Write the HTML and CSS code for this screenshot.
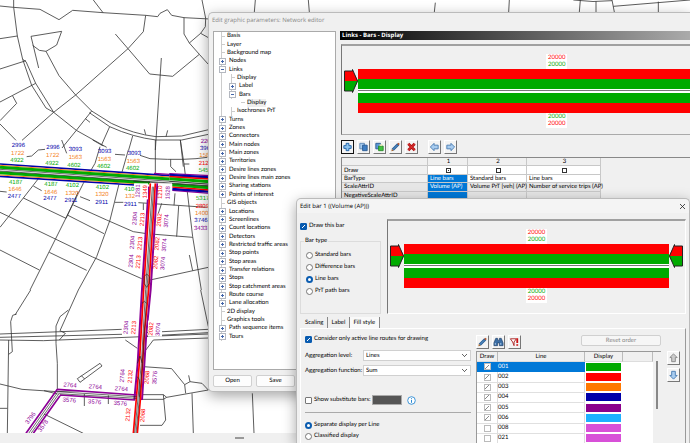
FILE: index.html
```html
<!DOCTYPE html>
<html lang="en">
<head>
    <meta charset="UTF-8">
    <meta name="viewport" content="width=device-width, initial-scale=1.0">
    <title>Network editor</title>
    <link rel="stylesheet" href="styles.css">
</head>
<body>
    <svg class="map" viewBox="0 0 2070 1329" preserveAspectRatio="xMinYMin slice">
        <!-- streets, north -->
        <g class="street">
            <path d="M0 18L40 22L120 28L177 59L218 31L309 38L437 46L473 50L480 40L502 29L515 46L552 53L630 57"/>
            <path d="M41 0V22L52 108L68 178L95 256L138 324L161 337M68 178L78 185L107 250L161 337M280 0L309 38"/>
            <path d="M0 116L52 108M0 207L78 182M0 306L107 250M38 288L50 310L0 362M0 372L48 421"/>
            <path d="M437 46L430 95L384 146L227 285L161 337L66 421"/>
            <path d="M346 102L384 146L449 222L518 229L598 163L568 129L552 102V53M598 163L625 193M606 0L617 55L616 80L602 100L568 129M602 100L625 113"/>
            <path d="M116 204L93 109L185 94L170 135L138 154L118 151L98 136M138 154L177 227L227 285L275 333"/>
            <path d="M275 333L334 370Q400 402 468 410L545 408L630 388M268 338L329 380Q400 412 468 420L545 420L630 402"/>
            <path d="M275 333L229 391L186 444M161 337L229 391L320 442M256 356L270 367M329 380L304 436M398 408L386 450M484 174L466 450M433 388L437 404M503 391L498 410M541 420L550 500"/>
            <path d="M766 0L763 36M925 0L928 36M1306 8L1303 36M1528 0L1526 36M1741 0L1738 36M1788 4V36M1836 0L1843 36M1840 19L2070 0M1975 5V36M1720 0Q1780 8 1836 2"/>
        </g>
        <!-- streets, centre -->
        <g class="street" transform="translate(0 420)">
            <path d="M80 50L95 48L115 30L135 28M185 0L200 40M278 0L310 18M345 43L375 45M466 0V110M541 0L552 72L578 290L604 450"/>
            <path d="M300 20L285 70L250 130L215 200L90 450M385 30L365 100L330 240L290 350L235 450M140 84L70 174L0 262M100 138L125 152"/>
            <path d="M70 174L198 235L235 155M0 217L166 297L278 351L425 416M0 330L118 390M202 225L312 281M148 337L260 391"/>
            <path d="M220 195L320 240L400 275L440 281L578 292M240 170L270 182M345 187L370 187M415 188L620 202M536 198L530 290M450 420L625 382M568 345L578 392"/>
            <path d="M0 154L20 156M420 46L450 56Q560 62 622 52M512 58V80L528 95M552 72H568M525 160L522 196M485 190L475 220M430 190V210"/>
        </g>
        <!-- streets, south -->
        <g class="street" transform="translate(0 870)">
            <path d="M92 0L45 75M235 0L180 122M0 132L365 118M0 142L400 132M0 150L130 152L625 132M430 128L625 118M440 138L625 128M460 150L625 144"/>
            <path d="M50 72L38 76L32 95L37 185L26 193M26 150L22 430M205 60L180 80L168 108V160L172 220V300M180 122L196 130L178 150"/>
            <path d="M0 282L66 298L172 305L238 302M132 302L172 312M0 355H22M376 150L412 175M460 150L430 190M132 372L250 430"/>
            <path d="M430 230L515 236L554 284L557 310M554 284L570 275L566 256M570 275L606 280L625 300L500 322L490 314H425M425 328L490 328L500 322M490 314L497 390L486 406H415M602 0L625 110M576 310L580 430M757 310L762 430"/>
            <path d="M232 266L300 220L306 228L240 277ZM244 257L254 267M253 312V348M325 316V342"/>
        </g>

        <!-- main road volumes -->
        <g class="bars" transform="translate(0 420)">
            <path class="white" stroke-width="38" d="M0 91L508 124L630 132"/>
            <path class="c4" stroke-width="5" d="M0 72L508 107M0 109L405 135"/>
            <path class="c3" stroke-width="3" d="M0 76L508 111M0 105L405 131"/>
            <path class="c1" stroke-width="9" d="M0 82L508 117M0 98L450 129"/>
            <path class="thin" d="M0 88L625 132M0 93L625 137"/>
            <path class="c5" stroke-width="4" d="M462 100L508 103M508 101L630 107M517 151L630 160"/>
            <path class="c4" stroke-width="7" d="M508 105L630 112M517 147L630 155"/>
            <path class="c2" stroke-width="5" d="M508 110L630 117M517 141L630 150"/>
            <path class="c1" stroke-width="9" d="M508 116L630 125M517 134L630 143"/>
            <path class="thin" d="M508 124L630 133M400 124L630 138"/>
        </g>
        <!-- north-south road volumes -->
        <g class="bars">
            <path class="white" stroke-width="22" d="M459 550L437 868L424 1090L407 1300"/>
            <path class="c5" stroke-width="6" d="M446 560L426 868L413 1090L403 1200M472 550L452 868L439 1000L426 1200"/>
            <path class="c2" stroke-width="5" d="M451 550L431 868L418 1090L400 1300M466 550L446 868L433 1000L421 1200L412 1300"/>
            <path class="thin" d="M457 560L437 868L424 1090L404 1300M461 560L441 868L428 1090L408 1300"/>
            <path class="thin" d="M432 830L440 822L448 830V850L440 862L432 850ZM426 910L433 904L440 910M412 1090L420 1068L427 1090M412 1130L418 1140V1190"/>
            <path class="c5" stroke-width="5" d="M172 1168L410 1185M180 1185L405 1200M172 1168L78 1300M180 1187L100 1300"/>
            <path class="thin" d="M170 1175L410 1190M175 1181L410 1195M172 1178L86 1300M176 1182L93 1300"/>
        </g>

        <!-- volume labels -->
        <g class="halo">
            <rect x="402" y="550" width="42" height="48"/><rect x="474" y="550" width="42" height="48"/>
            <rect x="366" y="958" width="44" height="48"/><rect x="444" y="962" width="42" height="48"/>
        </g>
        <g class="volume c4">
            <text x="55" y="435">2996</text><text x="159" y="440">2996</text><text x="226" y="447">3093</text><text x="314" y="453">3093</text><text x="403" y="460">3093</text>
            <text x="43" y="587">2477</text><text x="150" y="595">2477</text><text x="213" y="600">2911</text><text x="305" y="606">2911</text><text x="391" y="611">2911</text>
            <text x="620" y="443">3965</text><text x="603" y="661">3746</text>
        </g>
        <g class="volume c3">
            <text x="53" y="458">1722</text><text x="158" y="466">1722</text><text x="226" y="471">1563</text><text x="313" y="476">1563</text><text x="400" y="482">1563</text>
            <text x="45" y="566">1646</text><text x="152" y="575">1646</text><text x="216" y="579">1320</text><text x="306" y="583">1320</text><text x="390" y="589">132</text>
            <text x="618" y="466">1582</text><text x="605" y="639">1400</text>
        </g>
        <g class="volume c1">
            <text x="51" y="480">4922</text><text x="156" y="488">4922</text><text x="222" y="494">4602</text><text x="311" y="499">4602</text><text x="398" y="505">4602</text>
            <text x="47" y="545">4187</text><text x="153" y="551">4187</text><text x="217" y="554">4102</text><text x="307" y="562">4102</text><text x="388" y="567">410</text>
            <text x="616" y="511">5451</text><text x="608" y="594">5317</text>
        </g>
        <g class="volume c2">
            <text x="616" y="488">2123</text><text x="607" y="617">2809</text>
            <text transform="translate(435 575) rotate(-88)">1349</text><text transform="translate(480 577) rotate(-88)">1210</text>
            <text transform="translate(427 658) rotate(-86)">2213</text><text transform="translate(478 660) rotate(-86)">2082</text>
            <text transform="translate(420 730) rotate(-86)">2213</text><text transform="translate(471 731) rotate(-86)">2082</text>
            <text transform="translate(415 786) rotate(-86)">2213</text><text transform="translate(467 787) rotate(-86)">2082</text>
            <text transform="translate(401 983) rotate(-86)">2213</text><text transform="translate(453 987) rotate(-86)">2082</text>
            <text transform="translate(391 1129) rotate(-86)">2132</text><text transform="translate(441 1132) rotate(-86)">2068</text>
            <text transform="translate(384 1244) rotate(-86)">2132</text><text transform="translate(428 1246) rotate(-86)">2068</text>
        </g>
        <g class="volume c5">
            <text x="622" y="422">2205</text><text x="602" y="685">3433</text>
            <text transform="translate(413 573) rotate(-88)">1281</text><text transform="translate(503 578) rotate(-88)">1528</text>
            <text transform="translate(404 655) rotate(-86)">2304</text><text transform="translate(499 663) rotate(-86)">3074</text>
            <text transform="translate(397 727) rotate(-86)">2304</text><text transform="translate(493 735) rotate(-86)">3074</text>
            <text transform="translate(393 783) rotate(-86)">2304</text><text transform="translate(488 790) rotate(-86)">3074</text>
            <text transform="translate(378 982) rotate(-86)">2304</text><text transform="translate(474 988) rotate(-86)">3074</text>
            <text transform="translate(367 1127) rotate(-86)">2764</text><text transform="translate(464 1133) rotate(-86)">3576</text>
            <text transform="translate(210 1155) rotate(4)">2764</text><text transform="translate(286 1160) rotate(4)">2764</text><text transform="translate(364 1166) rotate(4)">2764</text>
            <text transform="translate(208 1200) rotate(4)">3576</text><text transform="translate(284 1205) rotate(4)">3576</text><text transform="translate(361 1210) rotate(4)">3576</text>
            <text transform="translate(91 1254) rotate(-54)">3796</text><text transform="translate(129 1277) rotate(-54)">3578</text>
        </g>
    </svg>
    <div class="statusbar"><span class="grip"></span></div>

    <section class="window params">
        <h1 class="title muted">Edit graphic parameters: Network editor</h1>
        <div class="params-body">
            <div class="side">
                <ul class="tree">
                    <li>Basis</li>
                    <li>Layer</li>
                    <li>Background map</li>
                    <li class="plus">Nodes</li>
                    <li class="minus">Links</li>
                    <li class="sub">Display</li>
                    <li class="sub plus">Label</li>
                    <li class="sub minus">Bars</li>
                    <li class="sub2"><span class="current">Display</span></li>
                    <li class="sub">Isochrones PrT</li>
                    <li class="plus">Turns</li>
                    <li class="plus">Zones</li>
                    <li class="plus">Connectors</li>
                    <li class="plus">Main nodes</li>
                    <li class="plus">Main zones</li>
                    <li class="plus">Territories</li>
                    <li class="plus">Desire lines zones</li>
                    <li class="plus">Desire lines main zones</li>
                    <li class="plus">Sharing stations</li>
                    <li class="plus">Points of interest</li>
                    <li>GIS objects</li>
                    <li class="plus">Locations</li>
                    <li class="plus">Screenlines</li>
                    <li class="plus">Count locations</li>
                    <li class="plus">Detectors</li>
                    <li class="plus">Restricted traffic areas</li>
                    <li class="plus">Stop points</li>
                    <li class="plus">Stop areas</li>
                    <li class="plus">Transfer relations</li>
                    <li class="plus">Stops</li>
                    <li class="plus">Stop catchment areas</li>
                    <li class="plus">Route course</li>
                    <li class="plus">Lane allocation</li>
                    <li>2D display</li>
                    <li>Graphics tools</li>
                    <li class="plus">Path sequence items</li>
                    <li class="plus">Tours</li>
                </ul>
                <div class="side-buttons">
                    <button type="button" class="btn">Open</button>
                    <button type="button" class="btn">Save</button>
                </div>
            </div>
            <div class="main">
                <h2 class="caption">Links - Bars - Display</h2>
                <div class="preview wide">
                    <p class="values"><span class="t2">20000</span><span class="t1">20000</span></p>
                    <div class="preview-row">
                        <svg class="arrow" viewBox="0 0 14 24"><path fill="#f00" d="M0 2H9L14 12H0Z"/><path fill="#0a0" d="M0 12H14L9 22H0Z"/><path fill="none" stroke="#222" d="M.5 2H8.500V.5L13.500 12L8.500 23.500V22H.5Z"/></svg>
                        <div class="stripes"><i class="red"></i><i class="green"></i><i class="axis"></i><i class="green"></i><i class="red"></i></div>
                    </div>
                    <p class="values"><span class="t1">20000</span><span class="t2">20000</span></p>
                </div>
                <div class="toolbar">
                    <button type="button" class="tool focus" aria-label="Add"><svg viewBox="0 0 12 12"><path d="M4.500 2h3v2.500H10v3H7.500V10h-3V7.500H2v-3h2.500z" fill="#8cc4f0" stroke="#1d5fa5"/></svg></button>
                    <button type="button" class="tool" aria-label="Copy"><svg viewBox="0 0 12 12"><path d="M2 2h5v6H2z" fill="#a9cdf0" stroke="#5b87b5"/><path d="M5 4h5v6H5z" fill="#3f7fc4" stroke="#2c5c94"/></svg></button>
                    <button type="button" class="tool" aria-label="Duplicate"><svg viewBox="0 0 12 12"><path d="M2 2h5v6H2z" fill="#5c9ad8" stroke="#2c5c94"/><path d="M5 5h5v5H5z" fill="#3fc43f" stroke="#2a8a2a"/><path d="M6 3h3v2H6z" fill="#dfe6b0"/></svg></button>
                    <button type="button" class="tool" aria-label="Edit"><svg viewBox="0 0 12 12"><path d="M3 9L9 3" stroke="#2a5f96" stroke-width="3"/><path d="M3 9L8 4" stroke="#6aa5dc"/><path d="M8.500 2l1.500 1.500" stroke="#b5532a" stroke-width="2"/><path d="M1.500 10.500l.5-2.500 2 2z" fill="#a8672c"/></svg></button>
                    <button type="button" class="tool" aria-label="Delete"><svg viewBox="0 0 12 12"><path d="M2.500 2.500l7 7M9.500 2.500l-7 7" stroke="#b01010" stroke-width="3"/><path d="M2.500 2.500l7 7M9.500 2.500l-7 7" stroke="#f04040"/></svg></button>
                    <span class="spacer"></span>
                    <button type="button" class="tool" aria-label="Move left"><svg viewBox="0 0 12 12"><path d="M1.500 6L5.500 2v2H10v4H5.500v2z" fill="#a9cdf0" stroke="#4a7db2"/></svg></button>
                    <button type="button" class="tool" aria-label="Move right"><svg viewBox="0 0 12 12"><path d="M10.500 6L6.500 2v2H2v4h4.500v2z" fill="#a9cdf0" stroke="#4a7db2"/></svg></button>
                </div>
                <div class="grid-box">
                    <table class="grid">
                        <colgroup><col class="w-name"><col class="w-1"><col class="w-2"><col class="w-3"></colgroup>
                        <tr><th></th><th>1</th><th>2</th><th>3</th></tr>
                        <tr><th>Draw</th><td class="mid"><input type="checkbox" class="box x" aria-label="Draw bar 1" checked></td><td class="mid"><input type="checkbox" class="box" aria-label="Draw bar 2"></td><td class="mid"><input type="checkbox" class="box" aria-label="Draw bar 3"></td></tr>
                        <tr><th>BarType</th><td class="sel">Line bars</td><td>Standard bars</td><td>Line bars</td></tr>
                        <tr class="ro"><th>ScaleAttrID</th><td class="sel">Volume (AP)</td><td>Volume PrT [veh] (AP)</td><td>Number of service trips (AP)</td></tr>
                        <tr class="ro"><th>NegativeScaleAttrID</th><td class="sel"></td><td></td><td></td></tr>
                    </table>
                </div>
            </div>
        </div>
    </section>

    <section class="window edit">
        <header class="edit-head">
            <h1 class="title">Edit bar 1 ((Volume (AP)))</h1>
            <button type="button" class="close" aria-label="Close"><svg viewBox="0 0 7 7"><path d="M1 1l5 5M6 1L1 6" stroke="#222" stroke-width=".8"/></svg></button>
        </header>
        <div class="edit-top">
            <div class="type">
                <label class="option"><input type="checkbox" class="check" checked>Draw this bar</label>
                <fieldset class="group">
                    <legend>Bar type</legend>
                    <label class="option"><input type="radio" class="radio" name="type">Standard bars</label>
                    <label class="option"><input type="radio" class="radio" name="type">Difference bars</label>
                    <label class="option"><input type="radio" class="radio" name="type" checked>Line bars</label>
                    <label class="option"><input type="radio" class="radio" name="type">PrT path bars</label>
                </fieldset>
            </div>
            <div class="preview">
                <p class="values"><span class="t2">20000</span><span class="t1">20000</span></p>
                <div class="preview-row">
                    <svg class="arrow" viewBox="0 0 14 24"><path fill="#f00" d="M0 2H9L14 12H0Z"/><path fill="#0a0" d="M0 12H14L9 22H0Z"/><path fill="none" stroke="#222" d="M.5 2H8.500V.5L13.500 12L8.500 23.500V22H.5Z"/></svg>
                    <div class="stripes"><i class="red"></i><i class="green"></i><i class="axis"></i><i class="green"></i><i class="red"></i></div>
                    <svg class="arrow flip" viewBox="0 0 14 24"><path fill="#f00" d="M0 2H9L14 12H0Z"/><path fill="#0a0" d="M0 12H14L9 22H0Z"/><path fill="none" stroke="#222" d="M.5 2H8.500V.5L13.500 12L8.500 23.500V22H.5Z"/></svg>
                </div>
                <p class="values"><span class="t1">20000</span><span class="t2">20000</span></p>
            </div>
        </div>
        <nav class="tabs">
            <button type="button" class="tab">Scaling</button>
            <button type="button" class="tab">Label</button>
            <button type="button" class="tab active">Fill style</button>
        </nav>
        <div class="panel">
            <div class="settings">
                <label class="option"><input type="checkbox" class="check" checked>Consider only active line routes for drawing</label>
                <div class="field"><label for="level">Aggregation level:</label><select id="level"><option>Lines</option></select></div>
                <div class="field"><label for="func">Aggregation function:</label><select id="func"><option>Sum</option></select></div>
                <div class="substitute">
                    <label class="option"><input type="checkbox" class="check">Show substitute bars:</label>
                    <button type="button" class="swatch" aria-label="Substitute bar style"></button>
                    <svg class="info" viewBox="0 0 9 9"><circle cx="4.500" cy="4.500" r="3.800" fill="#fff" stroke="#2a8ad4" stroke-width=".9"/><path d="M4.500 4v2.800M4.500 2.200v1" stroke="#2a8ad4"/></svg>
                </div>
                <div class="choice">
                    <label class="option"><input type="radio" class="radio" name="mode" checked>Separate display per Line</label>
                    <label class="option"><input type="radio" class="radio" name="mode">Classified display</label>
                </div>
            </div>
            <div class="lines">
                <div class="toolbar">
                    <button type="button" class="tool" aria-label="Edit line"><svg viewBox="0 0 12 12"><path d="M3 9L9 3" stroke="#2a5f96" stroke-width="3"/><path d="M3 9L8 4" stroke="#6aa5dc"/><path d="M8.500 2l1.500 1.500" stroke="#b5532a" stroke-width="2"/><path d="M1.500 10.500l.5-2.500 2 2z" fill="#a8672c"/></svg></button>
                    <button type="button" class="tool" aria-label="Find"><svg viewBox="0 0 12 12"><path d="M3 2h2v2h2V2h2l2 5v3H7V7H5v3H1V7z" fill="#3b6ea5" stroke="#1f3f66" stroke-width=".7"/><path d="M2.500 7v2M8.500 7v2" stroke="#b5d3f0"/></svg></button>
                    <button type="button" class="tool" aria-label="Filter"><svg viewBox="0 0 12 12"><path d="M1.500 2.500H8L5.500 6v4L4 6z" fill="#fff" stroke="#a22"/><path d="M9 2v5M9 8.500v1.500" stroke="#c11" stroke-width="2"/></svg></button>
                    <button type="button" class="btn reset" disabled>Reset order</button>
                </div>
                <div class="line-list">
                    <table class="line-table">
                        <colgroup><col class="w-draw"><col class="w-line"><col class="w-display"><col></colgroup>
                        <tr><th>Draw</th><th>Line</th><th>Display</th><th></th></tr>
                        <tr class="picked"><td class="mid"><input type="checkbox" class="box tick" aria-label="Draw 001" checked></td><td>001</td><td><i class="bar b1"></i></td><td></td></tr>
                        <tr><td class="mid"><input type="checkbox" class="box tick" aria-label="Draw 002" checked></td><td>002</td><td><i class="bar b2"></i></td><td></td></tr>
                        <tr><td class="mid"><input type="checkbox" class="box tick" aria-label="Draw 003" checked></td><td>003</td><td><i class="bar b3"></i></td><td></td></tr>
                        <tr><td class="mid"><input type="checkbox" class="box tick" aria-label="Draw 004" checked></td><td>004</td><td><i class="bar b4"></i></td><td></td></tr>
                        <tr><td class="mid"><input type="checkbox" class="box tick" aria-label="Draw 005" checked></td><td>005</td><td><i class="bar b5"></i></td><td></td></tr>
                        <tr><td class="mid"><input type="checkbox" class="box tick" aria-label="Draw 006" checked></td><td>006</td><td><i class="bar b6"></i></td><td></td></tr>
                        <tr><td class="mid"><input type="checkbox" class="box tick" aria-label="Draw 008"></td><td>008</td><td><i class="bar b7"></i></td><td></td></tr>
                        <tr><td class="mid"><input type="checkbox" class="box tick" aria-label="Draw 021"></td><td>021</td><td><i class="bar b7"></i></td><td></td></tr>
                    </table>
                    <div class="scroll"><span class="thumb"></span></div>
                </div>
            </div>
            <div class="order">
                <button type="button" class="tool" aria-label="Move up"><svg viewBox="0 0 12 12"><path d="M6 1.500L10 5.500H8V10H4V5.500H2z" fill="#ccc" stroke="#888"/></svg></button>
                <button type="button" class="tool" aria-label="Move down"><svg viewBox="0 0 12 12"><path d="M6 10.500L10 6.500H8V2H4v4.500H2z" fill="#a9cdf0" stroke="#4a7db2"/></svg></button>
            </div>
        </div>
    </section>
</body>
</html>
```
FILE: styles.css
```css
* { box-sizing: border-box; }
body { margin: 0; height: 100vh; overflow: hidden; position: relative; background: #fff; color: #000; font: 6px/8px Lato, "Open Sans", sans-serif; text-rendering: geometricPrecision; }
h1, h2, p, ul { margin: 0; padding: 0; font-size: inherit; font-weight: normal; }
button, select, input { font: inherit; color: inherit; margin: 0; padding: 0; text-rendering: inherit; }
svg { display: block; }

/* map */
.map { width: 100%; height: 100%; }
.street path { fill: none; stroke: #333; stroke-width: 2.4; }
.bars path { fill: none; stroke: currentColor; }
.bars .white { color: #fff; }
.bars .thin { color: #222; stroke-width: 2; }
.halo { fill: #fff; }
.volume { fill: currentColor; font-family: "Liberation Sans", Arial, sans-serif; font-size: 18px; text-anchor: middle; dominant-baseline: central; }
.c1 { color: #00aa00; }
.c2 { color: #ff0000; }
.c3 { color: #f58220; }
.c4 { color: #0000aa; }
.c5 { color: #8c0096; }
.statusbar { position: absolute; left: 0; right: 0; bottom: 0; height: 10px; background: #f0f0f0; display: flex; justify-content: flex-end; }
.grip { width: 9px; height: 2px; margin: 4px 446px 0 0; background: #999; }

/* windows */
.window { position: absolute; background: #f0f0f0; border: 1px solid #bbb; border-radius: 5px; box-shadow: 0 4px 14px rgba(0, 0, 0, .35); display: flex; flex-direction: column; }
.params { left: 208px; right: 0; top: 12px; height: 380px; border-right: 0; border-radius: 5px 0 0 5px; }
.edit { left: 296px; right: 0; top: 198px; bottom: 0; border-bottom: 0; border-radius: 5px 5px 0 0; overflow: hidden; }
.title, .caption { font-family: "Open Sans", "Noto Sans", sans-serif; }
.title { padding: 3px 3px; }
.muted { color: #888; }
.params-body { flex: 1; display: flex; gap: 4px; padding: 4px 0 4px 4px; min-height: 0; }
.side { width: 123px; display: flex; flex-direction: column; }
.btn { background: #fdfdfd; border: 1px solid #d0d0d0; border-radius: 2px; }
.side-buttons { display: flex; gap: 4px; padding-top: 5px; }
.side-buttons .btn { width: 39px; height: 12px; }

/* tree */
.tree { flex: 1; display: grid; grid-auto-rows: 1fr; padding: 0 0 28px 7px; list-style: none; background: #fff; border: 1px solid #aaa; }
.tree li { display: flex; align-items: center; white-space: nowrap; background: linear-gradient(#ccc, #ccc) 0 0 / 1px 100% no-repeat; }
.tree li::before { content: ""; width: 4px; height: 1px; margin-right: 2px; background: #ccc; }
.tree .plus::before, .tree .minus::before { width: 5px; height: 5px; margin: 0 3px 0 -2px; border: 1px solid #b4b8c0; }
.tree .plus::before { background: linear-gradient(#46a, #46a) center / 3px 1px no-repeat, linear-gradient(#46a, #46a) center / 1px 3px no-repeat #fff; }
.tree .minus::before { background: linear-gradient(#46a, #46a) center / 3px 1px no-repeat #fff; }
.tree .sub { padding-left: 10px; background-image: linear-gradient(#ccc, #ccc), linear-gradient(#ccc, #ccc); background-position: 0 0, 10px 0; }
.tree .sub2 { padding-left: 20px; }
.current { background: #eee; }

/* preview */
.main { flex: 1; min-width: 0; display: flex; flex-direction: column; }
.caption { height: 9px; line-height: 9px; padding-left: 2px; color: #fff; font-weight: bold; background: linear-gradient(90deg, #000, #aaa); }
.preview { flex: 1; display: flex; flex-direction: column; align-items: center; padding-top: 8px; border-top: 2px solid #a0a0a0; border-left: 1px solid #777; border-right: 1px solid #fff; border-bottom: 1px solid #fff; }
.preview.wide { flex: none; align-items: flex-start; height: 91px; margin: 4px 0 5px 1px; border-right: 0; border-bottom-color: #aaa; }
.wide .values { margin-left: 204px; }
.wide .preview-row { padding-right: 0; }
.values { display: flex; flex-direction: column; padding: 0 2px; background: #fff; line-height: 7px; height: 15px; }
.t1 { color: #0a0; }
.t2 { color: #f00; }
.preview-row { align-self: stretch; display: flex; padding: 0 2px; }
.arrow { width: 14px; height: 24px; }
.flip { transform: scaleX(-1); }
.stripes { flex: 1; display: flex; flex-direction: column; }
.stripes i { height: 10px; }
.red { background: #f00; }
.green { background: #0a0; }
.stripes .axis { height: 4px; background: #fff; border-top: 1px solid #fff; border-bottom: 1px solid #fff; box-shadow: inset 0 1px #777; }

/* toolbar */
.toolbar { display: flex; gap: 3px; }
.main .toolbar { padding-left: 1px; }
.tool { width: 13px; height: 14px; background: #f4f4f4; border: 1px solid; border-color: #fff #777 #777 #fff; }
.tool svg { width: 11px; height: 12px; fill: none; }
.tool.focus { border-color: #111; }
.spacer { width: 4px; }

/* attribute grid */
.grid-box { margin: 3px 0 0 1px; border-top: 1px solid #888; border-left: 1px solid #888; }
table { border-collapse: separate; border-spacing: 0; table-layout: fixed; }
th, td { padding: 0; font-weight: normal; white-space: nowrap; }
.grid { width: 259px; height: 42px; }
.grid th, .grid td { line-height: 7px; padding: 0 0 0 2px; border-right: 1px solid #c8c8c8; border-bottom: 1px solid #c8c8c8; }
.grid th { background: #f0f0f0; }
.grid th:first-child { text-align: left; }
.grid td { background: #fff; }
.grid .ro th, .grid .ro td { background: #e6e6e6; }
.grid .sel, .grid .ro .sel { background: #0078d7; color: #fff; }
.w-name { width: 86px; }
.w-1 { width: 40px; }
.w-2 { width: 59px; }
.mid { text-align: center; }
.box { appearance: none; display: block; width: 5px; height: 5px; margin: 0 auto; border: 1px solid #333; background: #fff; }
.box.x:checked { background: radial-gradient(#333, #333 40%, #fff 42%); }

/* edit bar window */
.edit-head { display: flex; justify-content: space-between; align-items: center; height: 14px; background: #f4f4f4; border-radius: 5px 5px 0 0; }
.close { width: 7px; height: 7px; margin-right: 3px; background: none; border: 0; }
.edit-top { display: flex; gap: 6px; padding: 6px 3px 0; height: 101px; }
.type { width: 81px; padding-top: 3px; display: flex; flex-direction: column; gap: 7px; }
.option { display: flex; align-items: center; gap: 2px; height: 8px; white-space: nowrap; }
.group { flex: 1; margin: 0; padding: 6px 5px 0; border: 1px solid #dcdcdc; min-width: 0; display: flex; flex-direction: column; gap: 4px; }
.group legend { padding: 0 1px; margin-left: -2px; }
.check, .radio { appearance: none; width: 7px; height: 7px; border: 1px solid #777; background: #fff; }
.check { border-radius: 1px; }
.radio { border-radius: 50%; }
.check:checked { border-color: #0a5cb0; background: linear-gradient(135deg, transparent 45%, #fff 45%, #fff 58%, transparent 58%) center / 3px 3px no-repeat #0a5cb0; }
.radio:checked { border: 2px solid #0a5cb0; }
.tabs { display: flex; height: 14px; padding: 3px 5px 0; }
.tab { height: 11px; padding: 0 4px 0 3px; background: none; border: 0; border-right: 1px solid #888; }
.tab.active { background: #f9f9f9; }
.panel { flex: 1; display: flex; margin: 0 3px; padding: 6px 5px 0 4px; border: 1px solid #fff; border-right-color: #999; border-bottom: 0; min-height: 0; }
.settings { width: 166px; margin-right: 5px; white-space: nowrap; }
.field { display: flex; align-items: center; justify-content: space-between; margin-top: 4px; height: 11px; }
.settings > .option + .field { margin-top: 7px; }
.field select { appearance: none; width: 108px; height: 11px; padding: 0 2px; border: 1px solid #d0d0d0; background: linear-gradient(45deg, transparent 45%, #666 45%, #666 55%, transparent 55%) right 5px center / 3px 3px no-repeat, linear-gradient(-45deg, transparent 45%, #666 45%, #666 55%, transparent 55%) right 3px center / 3px 3px no-repeat #fff; }
.substitute { display: flex; align-items: center; margin-top: 19px; padding-bottom: 7px; border-bottom: 1px solid #aaa; }
.substitute .option { width: 67px; }
.swatch { width: 30px; height: 10px; background: #555; border: 1px solid #aaa; }
.info { width: 9px; height: 9px; margin-left: 5px; }
.choice { display: flex; flex-direction: column; gap: 3px; margin-top: 8px; }
.lines { flex: 1; min-width: 0; }
.reset { width: 80px; height: 11px; margin-left: auto; color: #888; background: #f6f6f6; }
.line-list { display: flex; margin-top: 2px; height: 92px; border-top: 1px solid #999; border-left: 1px solid #999; background: #fff; }
.line-table { flex: 1; height: 92px; }
.line-table th { background: #f0f0f0; border-right: 1px solid #bbb; border-bottom: 1px solid #ddd; }
.line-table td { border-right: 1px solid #ddd; border-bottom: 1px solid #e0e0e0; line-height: 8px; }
.line-table td:nth-child(n+3) { border-color: transparent; }
.picked td:nth-child(-n+2) { background: #0078d7; color: #fff; border-color: #0078d7; }
.w-draw { width: 21px; }
.w-line { width: 87px; }
.w-display { width: 38px; }
.tick { width: 7px; height: 7px; border-color: #bbb; }
.tick:checked { background: linear-gradient(135deg, transparent 45%, #888 45%, #888 58%, transparent 58%) center / 4px 4px no-repeat #fff; }
.bar { display: block; height: 8px; margin: 0 1px; }
.b1 { background: #00aa00; }
.b2 { background: #ff0000; }
.b3 { background: #ff7800; }
.b4 { background: #0000aa; }
.b5 { background: #8c008c; }
.b6 { background: #1eb0ff; }
.b7 { background: #d850d8; }
.scroll { width: 8px; padding: 9px 3px; background: #f0f0f0; }
.thumb { display: block; width: 2px; height: 48px; background: #888; }
.order { display: flex; flex-direction: column; gap: 3px; padding: 16px 0 0 6px; }
```
